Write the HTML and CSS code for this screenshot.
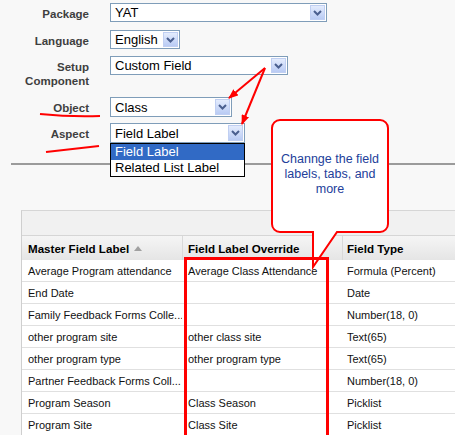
FILE: index.html
```html
<!DOCTYPE html>
<html>
<head>
<meta charset="utf-8">
<link rel="stylesheet" href="styles.css">
</head>
<body>
<div class="form">
  <div class="row">
    <div class="label">Package</div>
    <div class="sel w-pkg"><span class="val">YAT</span><span class="btn"><svg width="9" height="6" viewBox="0 0 9 6"><polyline points="1,1 4.5,4.5 8,1" fill="none" stroke="#4a5f8f" stroke-width="2"/></svg></span></div>
  </div>
  <div class="row r2">
    <div class="label">Language</div>
    <div class="sel w-lang"><span class="val">English</span><span class="btn"><svg width="9" height="6" viewBox="0 0 9 6"><polyline points="1,1 4.5,4.5 8,1" fill="none" stroke="#4a5f8f" stroke-width="2"/></svg></span></div>
  </div>
  <div class="row r3">
    <div class="label">Setup<br>Component</div>
    <div class="sel w-setup"><span class="val">Custom Field</span><span class="btn"><svg width="9" height="6" viewBox="0 0 9 6"><polyline points="1,1 4.5,4.5 8,1" fill="none" stroke="#4a5f8f" stroke-width="2"/></svg></span></div>
  </div>
  <div class="row r4">
    <div class="label">Object</div>
    <div class="sel tall w-obj"><span class="val">Class</span><span class="btn"><svg width="9" height="6" viewBox="0 0 9 6"><polyline points="1,1 4.5,4.5 8,1" fill="none" stroke="#4a5f8f" stroke-width="2"/></svg></span></div>
  </div>
  <div class="row r5">
    <div class="label">Aspect</div>
    <div class="sel-wrap">
      <div class="sel tall w-asp"><span class="val">Field Label</span><span class="btn"><svg width="9" height="6" viewBox="0 0 9 6"><polyline points="1,1 4.5,4.5 8,1" fill="none" stroke="#4a5f8f" stroke-width="2"/></svg></span></div>
      <div class="menu">
        <div class="opt on">Field Label</div>
        <div class="opt">Related List Label</div>
      </div>
    </div>
  </div>
</div>
<div class="rule"></div>
<div class="panel">
  <div class="band"></div>
  <div class="grid">
    <div class="hd">Master Field Label<svg class="sort" width="8" height="5" viewBox="0 0 8 5"><polygon points="0,5 4,0 8,5" fill="#a0a0a0"/></svg></div>
    <div class="hd h2">Field Label Override</div>
    <div class="hd h3">Field Type</div>

    <div class="c">Average Program attendance</div><div class="c c2">Average Class Attendance</div><div class="c c3">Formula (Percent)</div>
    <div class="c">End Date</div><div class="c c2"></div><div class="c c3">Date</div>
    <div class="c">Family Feedback Forms Colle...</div><div class="c c2"></div><div class="c c3">Number(18, 0)</div>
    <div class="c">other program site</div><div class="c c2">other class site</div><div class="c c3">Text(65)</div>
    <div class="c">other program type</div><div class="c c2">other program type</div><div class="c c3">Text(65)</div>
    <div class="c">Partner Feedback Forms Coll...</div><div class="c c2"></div><div class="c c3">Number(18, 0)</div>
    <div class="c">Program Season</div><div class="c c2">Class Season</div><div class="c c3">Picklist</div>
    <div class="c last">Program Site</div><div class="c c2 last">Class Site</div><div class="c c3 last">Picklist</div>
  </div>
</div>

<svg class="ink" width="455" height="435" viewBox="0 0 455 435">
  <defs>
    <marker id="ah" markerWidth="10" markerHeight="8" refX="9" refY="4" orient="auto" markerUnits="userSpaceOnUse">
      <path d="M0,0 L10,4 L0,8 z" fill="#ff0000"/>
    </marker>
  </defs>
  <line x1="265" y1="68" x2="229" y2="98" stroke="#ff0000" stroke-width="2" marker-end="url(#ah)"/>
  <line x1="265" y1="68" x2="242" y2="124" stroke="#ff0000" stroke-width="2" marker-end="url(#ah)"/>
  <path d="M40,114 Q70,117 100,116" fill="none" stroke="#ff0000" stroke-width="2"/>
  <path d="M46,152 Q72,149 99,146" fill="none" stroke="#ff0000" stroke-width="2"/>
  <path d="M280,120 H380 A8,8 0 0 1 388,128 V224 A8,8 0 0 1 380,232 H337 L313,267 V232 H280 A8,8 0 0 1 272,224 V128 A8,8 0 0 1 280,120 Z" fill="#ffffff" stroke="#ff0000" stroke-width="2" stroke-linejoin="miter"/>
</svg>
<div class="callout-text">Channge the field<br>labels, tabs, and<br>more</div>
<div class="highlight"></div>
</body>
</html>
```
FILE: styles.css
```css
html, body {
  margin: 0;
  padding: 0;
  overflow: hidden;
}
body {
  width: 455px;
  height: 435px;
  position: relative;
  background: #f8f8f8;
  font-family: "Liberation Sans", Arial, sans-serif;
  color: #000;
}
.form {
  display: flex;
  flex-direction: column;
  padding-top: 3px;
}
.row {
  display: grid;
  grid-template-columns: 89px max-content;
  column-gap: 21px;
  align-items: start;
}
.r2 { margin-top: 8px; }
.r3 { margin-top: 7px; }
.r4 { margin-top: 9px; }
.r5 { margin-top: 6px; }
.label {
  text-align: right;
  font-weight: bold;
  font-size: 11.5px;
  line-height: 14px;
  color: #3f3f3f;
  padding-top: 4px;
}
.sel {
  box-sizing: border-box;
  height: 19px;
  border: 1px solid #7f9db9;
  background: #fff;
  display: flex;
  align-items: center;
  justify-content: space-between;
  padding: 1px;
  font-size: 13px;
}
.sel .val {
  padding-left: 3px;
  line-height: 15px;
  white-space: nowrap;
}
.btn {
  box-sizing: border-box;
  width: 15px;
  height: 15px;
  border: 1px solid #c0cff2;
  background: linear-gradient(#e4ecfd, #b9cbf4);
  display: flex;
  align-items: center;
  justify-content: center;
}
.tall { height: 20px; }
.tall .btn { height: 16px; }
.w-pkg { width: 217px; }
.w-lang { width: 70px; }
.w-setup { width: 178px; }
.w-obj { width: 122px; }
.w-asp { width: 135px; }
.sel-wrap {
  position: relative;
}
.menu {
  position: absolute;
  top: 100%;
  left: 0;
  z-index: 5;
  box-sizing: border-box;
  width: 135px;
  border: 1px solid #000;
  background: #fff;
  font-size: 13px;
}
.opt {
  height: 16px;
  line-height: 16px;
  padding-left: 4px;
  white-space: nowrap;
}
.opt.on {
  background: #316ac5;
  color: #fff;
}
.rule {
  height: 2px;
  background: #9b9b9b;
  margin: 20px 0 0 11px;
}
.panel {
  margin: 45px 0 0 21px;
  width: 433px;
  border-top: 1px solid #d6d6d6;
  border-left: 1px solid #cfcfcf;
  background: #fff;
}
.band {
  height: 24px;
  background: #f1f1f1;
  border-bottom: 1px solid #d6d6d6;
}
.grid {
  display: grid;
  grid-template-columns: 160px 160px 1fr;
}
.hd {
  box-sizing: border-box;
  height: 24px;
  background: linear-gradient(#f5f5f5, #e5e5e5);
  font-weight: bold;
  font-size: 11.6px;
  display: flex;
  align-items: center;
  padding-left: 6px;
  white-space: nowrap;
}
.hd.h2 {
  border-left: 1px solid #d9d9d9;
  padding-left: 5px;
}
.hd.h3 {
  border-left: 1px solid #d9d9d9;
  padding-left: 4px;
}
.sort {
  margin-left: 5px;
}
.c {
  box-sizing: border-box;
  height: 22px;
  border-bottom: 1px solid #e0e0e0;
  font-size: 11px;
  display: flex;
  align-items: center;
  padding-left: 6px;
  white-space: nowrap;
  overflow: hidden;
  color: #111;
}
.c.c2 { padding-left: 6px; }
.c.c3 { padding-left: 5px; }
.c.last {
  height: 21px;
  border-bottom: none;
}
.ink {
  position: absolute;
  left: 0;
  top: 0;
  z-index: 6;
  pointer-events: none;
}
.callout-text {
  position: absolute;
  left: 272px;
  top: 152px;
  width: 116px;
  z-index: 7;
  text-align: center;
  font-size: 12.5px;
  line-height: 15px;
  color: #22409a;
}
.highlight {
  position: absolute;
  left: 184px;
  top: 257px;
  width: 145px;
  height: 178px;
  box-sizing: border-box;
  border: 3px solid #ff0000;
  border-bottom: none;
  z-index: 8;
}
```
